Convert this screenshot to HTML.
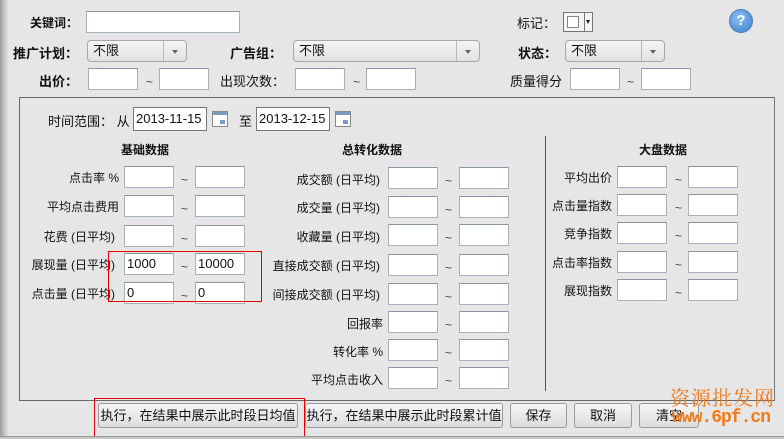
<!DOCTYPE html>
<html><head><meta charset="utf-8"><style>
*{margin:0;padding:0;box-sizing:border-box}
body{width:784px;height:439px;background:#e6e6e6;position:relative;overflow:hidden;font-family:"Liberation Sans","Noto Sans CJK SC",sans-serif;font-size:12px;color:#111}
.a{position:absolute;white-space:nowrap}
.in{position:absolute;background:#fff;border:1px solid #a9b0b8;border-top-color:#8d949c;height:22px;font-size:13px;line-height:20px;padding-left:2px}
.sel{position:absolute;background:linear-gradient(#f4f4f4,#e2e2e2);border:1px solid #a8a8a8;border-radius:4px;height:22px;line-height:20px;padding-left:5px;font-size:13px}
.sel:after{content:"";position:absolute;right:0;top:0;width:22px;height:20px;border-left:1px solid #b8b8b8}
.sel i{position:absolute;right:8px;top:9px;border:3px solid transparent;border-top:4px solid #666}
.l{position:absolute;text-align:right;white-space:nowrap;font-size:12px}
.t{position:absolute;font-size:12px;color:#444;margin-top:4px}
.btn{position:absolute;top:403px;height:25px;background:linear-gradient(#f6f6f6,#dcdcdc);border:1px solid #9a9a9a;border-radius:3px;text-align:center;line-height:23px;font-size:13px}
.red{position:absolute;border:1px solid #e00000}
</style></head><body>
<div class="a" style="left:0;top:0;width:8px;height:439px;background:linear-gradient(90deg,#9a9a9a,#c8c8c8 60%,#e0e0e0)"></div>

<div class="l" style="left:20px;width:58px;top:14px;font-weight:bold">关键词：</div>
<div class="in" style="left:86px;top:11px;width:154px"></div>
<div class="l" style="left:500px;width:56px;top:13px;font-size:13px">标记：</div>
<div class="a" style="left:563px;top:12px;width:30px;height:20px;border:1px solid #777;background:#f4f4f4"><div class="a" style="left:3px;top:3px;width:12px;height:12px;border:1px solid #888;background:#fff"></div><div class="a" style="left:20px;top:0;width:1px;height:18px;background:#777"></div><div class="a" style="left:22px;top:7px;border:2.5px solid transparent;border-top:4px solid #222"></div></div>
<div class="a" style="left:729px;top:9px;width:24px;height:24px;border-radius:50%;background:radial-gradient(circle at 40% 35%,#8cc0f0,#3a7fd0);border:1px solid #4d7fb8;color:#fff;font-weight:bold;font-size:15px;text-align:center;line-height:22px">?</div>

<div class="l" style="left:10px;width:68px;top:43px;font-weight:bold;font-size:13px">推广计划：</div>
<div class="sel" style="left:87px;top:40px;width:100px">不限<i></i></div>
<div class="l" style="left:220px;width:62px;top:43px;font-weight:bold;font-size:13px">广告组：</div>
<div class="sel" style="left:293px;top:40px;width:187px">不限<i></i></div>
<div class="l" style="left:500px;width:57px;top:43px;font-weight:bold;font-size:13px">状态：</div>
<div class="sel" style="left:565px;top:40px;width:100px">不限<i></i></div>

<div class="l" style="left:20px;width:58px;top:71px;font-weight:bold;font-size:13px">出价：</div>
<div class="in" style="left:88px;top:68px;width:50px"></div><div class="a t" style="left:146px;top:71px">~</div>
<div class="in" style="left:159px;top:68px;width:50px"></div>
<div class="l" style="left:220px;width:64px;top:71px;font-size:13px">出现次数：</div>
<div class="in" style="left:295px;top:68px;width:50px"></div><div class="a t" style="left:353px;top:71px">~</div>
<div class="in" style="left:366px;top:68px;width:50px"></div>
<div class="l" style="left:500px;width:62px;top:71px;font-size:13px">质量得分</div>
<div class="in" style="left:570px;top:68px;width:50px"></div><div class="a t" style="left:627px;top:71px">~</div>
<div class="in" style="left:641px;top:68px;width:50px"></div>

<div class="a" style="left:19px;top:97px;width:756px;height:304px;border:1px solid #666;border-right-color:#777"></div>
<div class="a" style="left:48px;top:111px;font-size:13px">时间范围：&nbsp;从</div>
<div class="in" style="left:133px;top:107px;width:74px;height:24px;border-color:#777;line-height:22px">2013-11-15</div>
<div class="a" style="left:212px;top:111px;width:16px;height:16px;border:1px solid #888;background:linear-gradient(#7a9ac0 0 3px,#fff 3px);"><div class="a" style="left:7px;top:8px;width:5px;height:4px;background:#7d9ec8"></div></div>
<div class="a" style="left:239px;top:111px;font-size:13px">至</div>
<div class="in" style="left:256px;top:107px;width:74px;height:24px;border-color:#777;line-height:22px">2013-12-15</div>
<div class="a" style="left:335px;top:111px;width:16px;height:16px;border:1px solid #888;background:linear-gradient(#7a9ac0 0 3px,#fff 3px);"><div class="a" style="left:7px;top:8px;width:5px;height:4px;background:#7d9ec8"></div></div>

<div class="a" style="left:121px;top:141px;font-weight:bold;font-size:12px">基础数据</div>
<div class="a" style="left:342px;top:141px;font-weight:bold;font-size:12px">总转化数据</div>
<div class="a" style="left:639px;top:141px;font-weight:bold;font-size:12px">大盘数据</div>
<div class="a" style="left:545px;top:136px;width:1px;height:255px;background:#555"></div>

<div class="l" style="left:10px;width:109px;top:169px">点击率 %</div>
<div class="in" style="left:124px;top:166px;width:50px"></div><div class="a t" style="left:181px;top:169px">~</div><div class="in" style="left:195px;top:166px;width:50px"></div>
<div class="l" style="left:10px;width:109px;top:198px">平均点击费用</div>
<div class="in" style="left:124px;top:195px;width:50px"></div><div class="a t" style="left:181px;top:198px">~</div><div class="in" style="left:195px;top:195px;width:50px"></div>
<div class="l" style="left:10px;width:105px;top:228px">花费 (日平均)</div>
<div class="in" style="left:124px;top:225px;width:50px"></div><div class="a t" style="left:181px;top:228px">~</div><div class="in" style="left:195px;top:225px;width:50px"></div>
<div class="l" style="left:10px;width:105px;top:256px">展现量 (日平均)</div>
<div class="in" style="left:124px;top:253px;width:50px">1000</div><div class="a t" style="left:181px;top:256px">~</div><div class="in" style="left:195px;top:253px;width:50px">10000</div>
<div class="l" style="left:10px;width:105px;top:285px">点击量 (日平均)</div>
<div class="in" style="left:124px;top:282px;width:50px">0</div><div class="a t" style="left:181px;top:285px">~</div><div class="in" style="left:195px;top:282px;width:50px">0</div>
<div class="red" style="left:108px;top:251px;width:154px;height:51px"></div>

<div class="l" style="left:250px;width:130px;top:171px">成交额 (日平均)</div>
<div class="in" style="left:388px;top:167px;width:50px"></div><div class="a t" style="left:445px;top:170px">~</div><div class="in" style="left:459px;top:167px;width:50px"></div>
<div class="l" style="left:250px;width:130px;top:199px">成交量 (日平均)</div>
<div class="in" style="left:388px;top:196px;width:50px"></div><div class="a t" style="left:445px;top:199px">~</div><div class="in" style="left:459px;top:196px;width:50px"></div>
<div class="l" style="left:250px;width:130px;top:228px">收藏量 (日平均)</div>
<div class="in" style="left:388px;top:224px;width:50px"></div><div class="a t" style="left:445px;top:227px">~</div><div class="in" style="left:459px;top:224px;width:50px"></div>
<div class="l" style="left:250px;width:130px;top:257px">直接成交额 (日平均)</div>
<div class="in" style="left:388px;top:254px;width:50px"></div><div class="a t" style="left:445px;top:257px">~</div><div class="in" style="left:459px;top:254px;width:50px"></div>
<div class="l" style="left:250px;width:130px;top:286px">间接成交额 (日平均)</div>
<div class="in" style="left:388px;top:283px;width:50px"></div><div class="a t" style="left:445px;top:286px">~</div><div class="in" style="left:459px;top:283px;width:50px"></div>
<div class="l" style="left:250px;width:133px;top:315px">回报率</div>
<div class="in" style="left:388px;top:311px;width:50px"></div><div class="a t" style="left:445px;top:314px">~</div><div class="in" style="left:459px;top:311px;width:50px"></div>
<div class="l" style="left:250px;width:133px;top:343px">转化率 %</div>
<div class="in" style="left:388px;top:339px;width:50px"></div><div class="a t" style="left:445px;top:342px">~</div><div class="in" style="left:459px;top:339px;width:50px"></div>
<div class="l" style="left:250px;width:133px;top:371px">平均点击收入</div>
<div class="in" style="left:388px;top:367px;width:50px"></div><div class="a t" style="left:445px;top:370px">~</div><div class="in" style="left:459px;top:367px;width:50px"></div>

<div class="l" style="left:550px;width:62px;top:169px">平均出价</div>
<div class="in" style="left:617px;top:166px;width:50px"></div><div class="a t" style="left:675px;top:169px">~</div><div class="in" style="left:688px;top:166px;width:50px"></div>
<div class="l" style="left:550px;width:62px;top:197px">点击量指数</div>
<div class="in" style="left:617px;top:194px;width:50px"></div><div class="a t" style="left:675px;top:197px">~</div><div class="in" style="left:688px;top:194px;width:50px"></div>
<div class="l" style="left:550px;width:62px;top:225px">竞争指数</div>
<div class="in" style="left:617px;top:222px;width:50px"></div><div class="a t" style="left:675px;top:225px">~</div><div class="in" style="left:688px;top:222px;width:50px"></div>
<div class="l" style="left:550px;width:62px;top:254px">点击率指数</div>
<div class="in" style="left:617px;top:251px;width:50px"></div><div class="a t" style="left:675px;top:254px">~</div><div class="in" style="left:688px;top:251px;width:50px"></div>
<div class="l" style="left:550px;width:62px;top:282px">展现指数</div>
<div class="in" style="left:617px;top:279px;width:50px"></div><div class="a t" style="left:675px;top:282px">~</div><div class="in" style="left:688px;top:279px;width:50px"></div>

<div class="btn" style="left:98px;width:200px">执行，在结果中展示此时段日均值</div>
<div class="btn" style="left:305px;width:198px">执行，在结果中展示此时段累计值</div>
<div class="btn" style="left:510px;width:57px">保存</div>
<div class="btn" style="left:574px;width:58px">取消</div>
<div class="btn" style="left:639px;width:60px;text-align:left;padding-left:16px">清空</div>
<div class="red" style="left:94px;top:398px;width:211px;height:40px"></div>
<div class="a" style="left:0;top:436px;width:784px;height:3px;background:#c8c8c8;border-top:1px solid #999"></div>

<div class="a" style="left:670px;top:382px;color:#f07a1a;font-size:20px;font-family:'Noto Serif CJK SC',serif;letter-spacing:1px">资源批发网</div>
<div class="a" style="left:672px;top:408px;color:#f07a1a;font-size:18px;font-weight:bold;font-family:'Liberation Mono',monospace;letter-spacing:-1px">www.6pf.cn</div>
</body></html>
